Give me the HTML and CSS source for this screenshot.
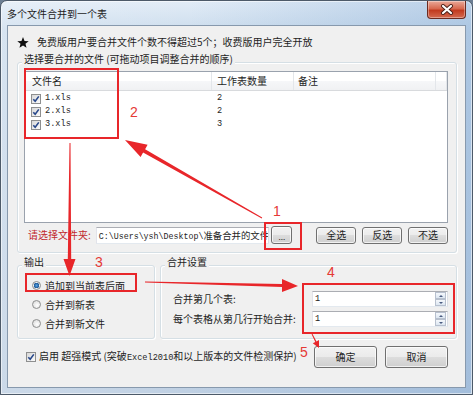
FILE: index.html
```html
<!DOCTYPE html>
<html lang="zh-CN">
<head>
  <meta charset="UTF-8" />
  <title>多个文件合并到一个表</title>
  <link rel="stylesheet" href="styles.css">
</head>
<body>
  <div class="window">
    <div class="titlebar">
      <span class="title">多个文件合并到一个表</span>
      <div class="close-btn">
        <svg width="14" height="11" viewBox="0 0 14 11">
          <path d="M3 2 L11 9 M11 2 L3 9" stroke="#4a1f18" stroke-width="4" stroke-linecap="round"/>
          <path d="M3 2 L11 9 M11 2 L3 9" stroke="#fff" stroke-width="2.2" stroke-linecap="round"/>
        </svg>
      </div>
    </div>

    <div class="client">
      <div class="notice">
        <svg class="star" viewBox="0 0 12 11">
          <polygon points="6,0 7.53,3.9 11.71,4.15 8.47,6.8 9.53,10.85 6,8.6 2.47,10.85 3.53,6.8 0.29,4.15 4.47,3.9" fill="#111"/>
        </svg>
        <span>免费版用户要合并文件个数不得超过5个；收费版用户完全开放</span>
      </div>

      <div class="group">
        <div class="group-title">选择要合并的文件 (可拖动项目调整合并的顺序)</div>
        <div class="group-box files-box">
          <div class="listview">
            <div class="lv-row lv-head">
              <div class="col col-name">文件名</div>
              <div class="col col-count">工作表数量</div>
              <div class="col col-note">备注</div>
              <div class="col"></div>
            </div>
            <div class="lv-body">
              <div class="lv-row">
                <div class="col col-name">
                  <span class="chk"><svg viewBox="0 0 8 8"><path d="M1.3 4.2 L3.2 6.3 L6.8 1.4" fill="none" stroke="#27478a" stroke-width="1.6"/></svg></span>
                  <span class="mono">1.xls</span>
                </div>
                <div class="col col-count mono">2</div>
              </div>
              <div class="lv-row">
                <div class="col col-name">
                  <span class="chk"><svg viewBox="0 0 8 8"><path d="M1.3 4.2 L3.2 6.3 L6.8 1.4" fill="none" stroke="#27478a" stroke-width="1.6"/></svg></span>
                  <span class="mono">2.xls</span>
                </div>
                <div class="col col-count mono">2</div>
              </div>
              <div class="lv-row">
                <div class="col col-name">
                  <span class="chk"><svg viewBox="0 0 8 8"><path d="M1.3 4.2 L3.2 6.3 L6.8 1.4" fill="none" stroke="#27478a" stroke-width="1.6"/></svg></span>
                  <span class="mono">3.xls</span>
                </div>
                <div class="col col-count mono">3</div>
              </div>
            </div>
          </div>

          <div class="folder-row">
            <span class="folder-label">请选择文件夹:</span>
            <div class="path-input"><span class="mono path-mono">C:\Users\ysh\Desktop\</span>准备合并的文件</div>
            <div class="btn browse-btn">...</div>
            <div class="btn small-btn first">全选</div>
            <div class="btn small-btn">反选</div>
            <div class="btn small-btn">不选</div>
          </div>
        </div>
      </div>

      <div class="settings-row">
        <div class="group group-output">
          <div class="group-title">输出</div>
          <div class="group-box output-box">
            <div class="radio-row"><span class="radio on"></span>追加到当前表后面</div>
            <div class="radio-row"><span class="radio"></span>合并到新表</div>
            <div class="radio-row"><span class="radio"></span>合并到新文件</div>
          </div>
        </div>
        <div class="group group-merge">
          <div class="group-title">合并设置</div>
          <div class="group-box merge-box">
            <span>合并第几个表:</span>
            <div class="spin"><span class="mono">1</span><div class="spin-btns"><span class="spin-up"></span><span class="spin-down"></span></div></div>
            <span>每个表格从第几行开始合并:</span>
            <div class="spin"><span class="mono">1</span><div class="spin-btns"><span class="spin-up"></span><span class="spin-down"></span></div></div>
          </div>
        </div>
      </div>

      <div class="bottom-row">
        <span class="chk"><svg viewBox="0 0 8 8"><path d="M1.3 4.2 L3.2 6.3 L6.8 1.4" fill="none" stroke="#27478a" stroke-width="1.6"/></svg></span>
        <span>启用 超强模式 (突破<span class="mono">Excel2010</span>和以上版本的文件检测保护)</span>
        <div class="btn big-btn ok-btn">确定</div>
        <div class="btn big-btn cancel-btn">取消</div>
      </div>
    </div>

    <!-- red annotations drawn over the dialog -->
    <svg class="annotations" width="473" height="395" viewBox="0 0 473 395">
      <g fill="none" stroke="#e8262a" stroke-width="2">
        <rect x="25" y="69" width="93" height="69"/>
        <rect x="265" y="223" width="36" height="26"/>
        <rect x="26" y="274" width="110" height="17"/>
        <rect x="303" y="284" width="151" height="49"/>
      </g>
      <g fill="#e8262a">
        <polygon points="262.2,217.6 145.1,149.2 147.6,144.8 125,140 140.6,157.0 143.1,152.6 261.8,218.4"/>
        <polygon points="69.5,143 70.5,143 71.2,259 75.5,259 69.5,276 63.5,259 67.8,259"/>
        <polygon points="145,281.5 282,284.1 282,279.1 298,286 282,292.1 282,287.1 145,282.5"/>
        <polygon points="311.6,334.2 315.3,342 312.8,343.3 319,348 319,340.1 316.5,341.4 312.4,333.8"/>
      </g>
      <g class="ann-num" fill="#e53935">
        <text x="273" y="216">1</text>
        <text x="130" y="117">2</text>
        <text x="95" y="267">3</text>
        <text x="327" y="277">4</text>
        <text x="300" y="357">5</text>
      </g>
    </svg>
  </div>
</body>
</html>
```

FILE: styles.css
```css
* {
  box-sizing: border-box;
}
body {
  margin: 0;
  font-family: "Noto Sans CJK SC", sans-serif;
  font-size: 10px;
  line-height: 12px;
  color: #1e1e1e;
  background: #6d7f94;
}
.mono {
  font-family: "Liberation Mono", monospace;
  font-size: 8.6px;
}
.window {
  position: relative;
  width: 473px;
  height: 395px;
  border: 1px solid #4d5a69;
  border-radius: 7px 7px 0 0;
  padding: 0 6px 6px;
  display: flex;
  flex-direction: column;
  background:
    linear-gradient(90deg, rgba(255, 255, 255, 0.2), rgba(255, 255, 255, 0) 40%, rgba(110, 155, 205, 0.35)),
    linear-gradient(#e2ecf7, #cddded 30px, #bfd0e3);
  box-shadow: inset 0 0 0 1px rgba(255, 255, 255, 0.55);
}
.titlebar {
  height: 24px;
  flex-shrink: 0;
  display: flex;
  align-items: center;
}
.title {
  margin-top: 1px;
  color: #1b1b1b;
}
.close-btn {
  margin-left: auto;
  align-self: flex-start;
  width: 39px;
  height: 18px;
  border: 1px solid #6b2a20;
  border-top: none;
  border-radius: 0 0 4px 4px;
  background: linear-gradient(#eaa999, #d7684f 45%, #c13a1f 55%, #d46a50);
  box-shadow: inset 0 0 0 1px rgba(255, 255, 255, 0.35);
  display: flex;
  align-items: center;
  justify-content: center;
}
.client {
  flex: 1;
  background: #f0f0f0;
  border: 1px solid #8799ad;
  padding: 10px 8px 0 9px;
}

/* notice line */
.notice {
  display: flex;
  align-items: center;
  gap: 8px;
  height: 12px;
}
.star {
  width: 12px;
  height: 11px;
}

/* group boxes */
.group {
  margin-top: 5px;
}
.group-title {
  position: relative;
  width: fit-content;
  margin-left: 5px;
  padding: 0 2px;
  background: #f0f0f0;
}
.group-box {
  margin-top: -3px;
  border: 1px solid #d5dfe5;
  border-radius: 3px;
  box-shadow: inset 1px 1px 0 #fff, 1px 1px 0 #fff;
}
.files-box {
  padding: 8px 8px 8px 6px;
}

/* list view */
.listview {
  height: 152px;
  background: #fff;
  border: 1px solid #9aa2ad;
}
.lv-row {
  display: grid;
  grid-template-columns: 187px 82px 142px 1fr;
  height: 13px;
  line-height: 13px;
}
.lv-head {
  height: 19px;
  line-height: 18px;
  border-bottom: 1px solid #d8dadd;
  background: linear-gradient(#fff, #fff 50%, #f6f7f9 50%, #f0f1f3);
}
.lv-head .col {
  border-right: 1px solid #e3e6ea;
}
.lv-body {
  padding-top: 1px;
}
.col-name {
  padding-left: 7px;
}
.lv-body .col-name {
  display: flex;
  align-items: center;
  gap: 4px;
  padding-left: 6px;
}
.col-count {
  padding-left: 5px;
}
.col-note {
  padding-left: 4px;
}
.chk {
  width: 10px;
  height: 10px;
  flex-shrink: 0;
  border: 1px solid #8e8f8f;
  background: linear-gradient(135deg, #d8d8d8, #fbfbfb);
  display: flex;
}
.chk svg {
  width: 8px;
  height: 8px;
}

/* folder row */
.folder-row {
  display: flex;
  align-items: center;
  height: 18px;
  margin-top: 3px;
  padding-left: 4px;
}
.folder-label {
  width: 68px;
  color: #c0282d;
}
.path-input {
  width: 174px;
  height: 17px;
  line-height: 15px;
  padding-left: 2px;
  font-size: 9.4px;
  background: #fff;
  border: 1px solid;
  border-color: #abadb3 #dbdfe6 #e3e9ef #e2e3ea;
  white-space: nowrap;
  overflow: hidden;
}
.path-mono {
  font-size: 8.3px;
}
.btn {
  height: 17px;
  border: 1px solid #707070;
  border-radius: 3px;
  background: linear-gradient(#f2f2f2, #ebebeb 50%, #dddddd 50%, #cfcfcf);
  box-shadow: inset 0 0 0 1px rgba(255, 255, 255, 0.7);
  display: flex;
  align-items: center;
  justify-content: center;
}
.browse-btn {
  width: 21px;
  height: 18px;
  margin-left: 2px;
  font-size: 8px;
  line-height: 8px;
  padding-top: 4px;
}
.small-btn {
  width: 40px;
  margin-left: 6px;
}
.small-btn.first {
  margin-left: 24px;
}

/* output + merge settings */
.settings-row {
  display: flex;
  gap: 5px;
  margin-top: 3px;
}
.settings-row .group {
  margin-top: 0;
}
.settings-row .group-box {
  height: 74px;
}
.group-output {
  width: 138px;
}
.group-merge {
  flex: 1;
}
.output-box {
  padding: 10px 0 0 14px;
}
.radio-row {
  display: flex;
  align-items: center;
  gap: 4px;
  height: 19px;
}
.radio {
  width: 9px;
  height: 9px;
  border-radius: 50%;
  border: 1px solid #8e8f8f;
  background: radial-gradient(circle at 60% 60%, #fff, #d4d4d4);
}
.radio.on {
  background: radial-gradient(circle, #5aa2e0 0, #2a6aab 2px, #1d4f86 2.6px, #eef2f6 3px, #d6d6d6);
}
.merge-box {
  display: grid;
  grid-template-columns: 1fr 136px;
  grid-auto-rows: 16px;
  row-gap: 4px;
  align-items: center;
  padding: 25px 8px 0 12px;
}
.spin {
  height: 16px;
  background: #fff;
  border: 1px solid;
  border-color: #abadb3 #dbdfe6 #e3e9ef #e2e3ea;
  display: flex;
  align-items: center;
  justify-content: space-between;
  padding-left: 2px;
}
.spin-btns {
  width: 11px;
  height: 14px;
  margin-right: 1px;
  display: flex;
  flex-direction: column;
}
.spin-btns span {
  flex: 1;
  border: 1px solid #b7c0ce;
  background: linear-gradient(#f5f8fc, #dce6f1);
  display: flex;
  align-items: center;
  justify-content: center;
}
.spin-up::after {
  content: "";
  border-left: 2px solid transparent;
  border-right: 2px solid transparent;
  border-bottom: 2px solid #4a5c80;
}
.spin-down::after {
  content: "";
  border-left: 2px solid transparent;
  border-right: 2px solid transparent;
  border-top: 2px solid #4a5c80;
}

/* bottom line */
.bottom-row {
  display: flex;
  align-items: center;
  height: 22px;
  margin-top: 7px;
  padding: 0 9px;
}
.bottom-row .chk {
  margin-right: 3px;
}
.big-btn {
  width: 63px;
  height: 22px;
}
.ok-btn {
  margin-left: auto;
}
.cancel-btn {
  margin-left: 8px;
}

/* annotations */
.annotations {
  position: absolute;
  left: -1px;
  top: -1px;
  pointer-events: none;
}
.ann-num {
  font-family: "Liberation Sans", sans-serif;
  font-size: 14px;
}
```
